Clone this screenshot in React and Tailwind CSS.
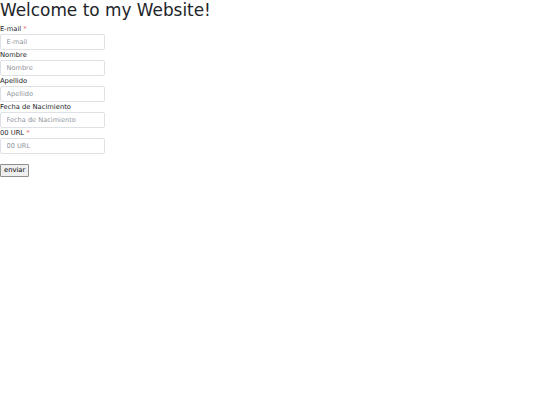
const fields = [
  { label: 'E-mail', required: true },
  { label: 'Nombre' },
  { label: 'Apellido' },
  { label: 'Fecha de Nacimiento' },
  { label: '00 URL', required: true },
];

export default function App() {
  return (
    <div className="min-h-screen bg-white text-[#212529] font-['DejaVu_Sans',sans-serif]">
      <h1 className="text-[16.9px] leading-[1.2] mb-[3.4px]">Welcome to my Website!</h1>
      <form>
        {fields.map((f) => (
          <div key={f.label}>
            <label className="block text-[6.75px] leading-[1.5]">
              {f.label}
              {f.required && <span className="text-[#e35d6a] ml-[2px]">*</span>}
            </label>
            <input
              type="text"
              placeholder={f.label}
              className="block w-[105px] h-[16px] px-[5.5px] text-[6.6px] border border-[#dee2e6] rounded-[2px] placeholder:text-[#8f959b] outline-none"
            />
          </div>
        ))}
        <button
          type="button"
          className="mt-[10px] px-[3px] h-[13px] text-[6.75px] leading-none text-black bg-[#efefef] border border-[#8f8f8f] rounded-[1px]"
        >
          enviar
        </button>
      </form>
    </div>
  );
}
